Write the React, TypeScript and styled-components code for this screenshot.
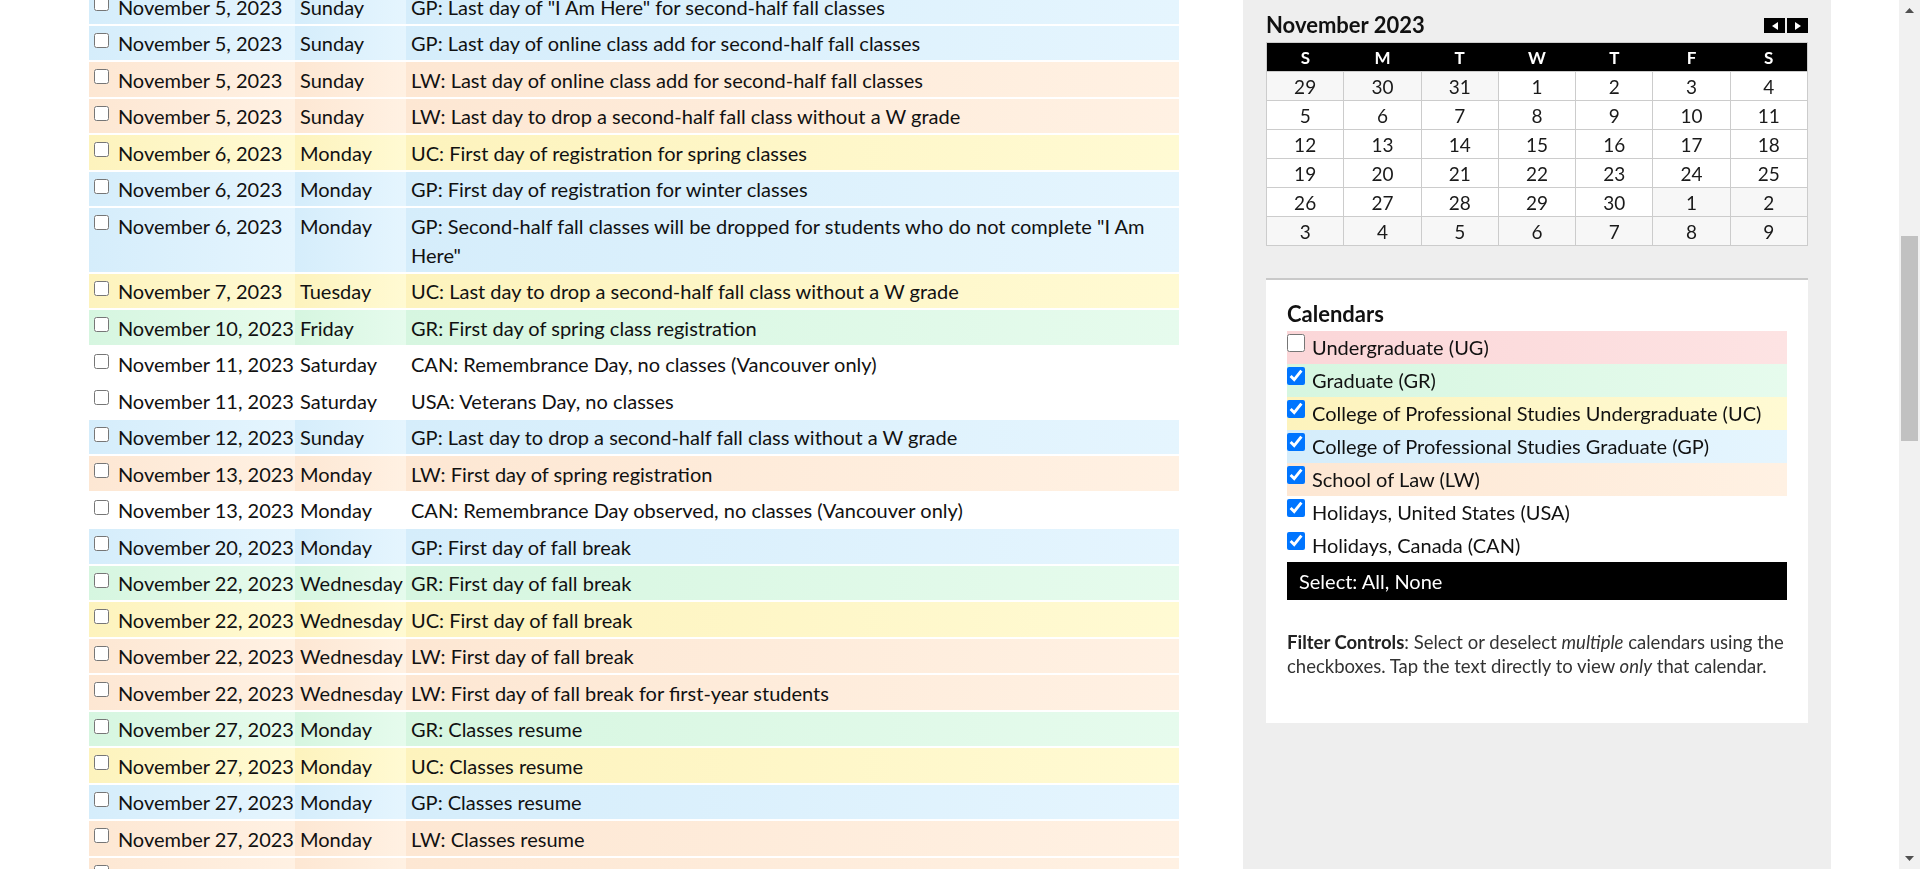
import React, { useLayoutEffect, useRef, useState } from "react";
import styled, { createGlobalStyle } from "styled-components";

type Cal = "UG" | "GR" | "UC" | "GP" | "LW" | "USA" | "CAN";

type CalEvent = {
  date: string;
  day: string;
  cal: Cal;
  text: string;
};

const tints: Record<Cal, [string, string]> = {
  UG: ["#fbd6d8", "#fde3e3"],
  GR: ["#d6f6e0", "#e6fbed"],
  UC: ["#fdf3bd", "#fffad3"],
  GP: ["#d5edfb", "#e5f5fe"],
  LW: ["#fde7d3", "#fff1e3"],
  USA: ["#ffffff", "#ffffff"],
  CAN: ["#ffffff", "#ffffff"],
};

// rows above the fold (scrolled out of view)
const earlier: CalEvent[] = [
  { date: "October 28, 2023", day: "Saturday", cal: "GP", text: "Last day of first-half fall classes" },
  { date: "October 28, 2023", day: "Saturday", cal: "UC", text: "Last day of first-half fall classes" },
  { date: "October 29, 2023", day: "Sunday", cal: "GP", text: "First-half fall break" },
  { date: "October 29, 2023", day: "Sunday", cal: "LW", text: "First-half fall break" },
  { date: "October 30, 2023", day: "Monday", cal: "GP", text: "First day of second-half fall classes" },
  { date: "October 30, 2023", day: "Monday", cal: "UC", text: "First day of second-half fall classes" },
  { date: "October 30, 2023", day: "Monday", cal: "LW", text: "First day of second-half fall classes" },
  { date: "October 30, 2023", day: "Monday", cal: "GR", text: "Last day to withdraw from fall classes" },
  { date: "October 31, 2023", day: "Tuesday", cal: "UC", text: "First-half fall final grades due" },
  { date: "October 31, 2023", day: "Tuesday", cal: "GP", text: "First-half fall final grades due" },
  { date: "November 1, 2023", day: "Wednesday", cal: "LW", text: "First-half fall final grades due" },
  { date: "November 1, 2023", day: "Wednesday", cal: "GR", text: "Fall graduation application deadline" },
  { date: "November 2, 2023", day: "Thursday", cal: "UC", text: "Last day of in-person class add for second-half fall classes" },
  { date: "November 2, 2023", day: "Thursday", cal: "GP", text: "Last day of in-person class add for second-half fall classes" },
  { date: "November 3, 2023", day: "Friday", cal: "LW", text: "Last day of in-person class add for second-half fall classes" },
  { date: "November 3, 2023", day: "Friday", cal: "GR", text: "Last day to drop a fall class without a W grade" },
  { date: "November 4, 2023", day: "Saturday", cal: "UC", text: "Last day of online class add for second-half fall classes" },
  { date: "November 4, 2023", day: "Saturday", cal: "UC", text: "Last day of \"I Am Here\" for second-half fall classes" },
  { date: "November 5, 2023", day: "Sunday", cal: "USA", text: "Daylight saving time ends" },
  { date: "November 5, 2023", day: "Sunday", cal: "CAN", text: "Daylight saving time ends" },
  { date: "November 5, 2023", day: "Sunday", cal: "UC", text: "Last day to drop a second-half fall class without a W grade" },
  { date: "November 5, 2023", day: "Sunday", cal: "LW", text: "Last day of \"I Am Here\" for second-half fall classes" },
];

const visible: CalEvent[] = [
  { date: "November 5, 2023", day: "Sunday", cal: "GP", text: "Last day of \"I Am Here\" for second-half fall classes" },
  { date: "November 5, 2023", day: "Sunday", cal: "GP", text: "Last day of online class add for second-half fall classes" },
  { date: "November 5, 2023", day: "Sunday", cal: "LW", text: "Last day of online class add for second-half fall classes" },
  { date: "November 5, 2023", day: "Sunday", cal: "LW", text: "Last day to drop a second-half fall class without a W grade" },
  { date: "November 6, 2023", day: "Monday", cal: "UC", text: "First day of registration for spring classes" },
  { date: "November 6, 2023", day: "Monday", cal: "GP", text: "First day of registration for winter classes" },
  { date: "November 6, 2023", day: "Monday", cal: "GP", text: "Second-half fall classes will be dropped for students who do not complete \"I Am Here\"" },
  { date: "November 7, 2023", day: "Tuesday", cal: "UC", text: "Last day to drop a second-half fall class without a W grade" },
  { date: "November 10, 2023", day: "Friday", cal: "GR", text: "First day of spring class registration" },
  { date: "November 11, 2023", day: "Saturday", cal: "CAN", text: "Remembrance Day, no classes (Vancouver only)" },
  { date: "November 11, 2023", day: "Saturday", cal: "USA", text: "Veterans Day, no classes" },
  { date: "November 12, 2023", day: "Sunday", cal: "GP", text: "Last day to drop a second-half fall class without a W grade" },
  { date: "November 13, 2023", day: "Monday", cal: "LW", text: "First day of spring registration" },
  { date: "November 13, 2023", day: "Monday", cal: "CAN", text: "Remembrance Day observed, no classes (Vancouver only)" },
  { date: "November 20, 2023", day: "Monday", cal: "GP", text: "First day of fall break" },
  { date: "November 22, 2023", day: "Wednesday", cal: "GR", text: "First day of fall break" },
  { date: "November 22, 2023", day: "Wednesday", cal: "UC", text: "First day of fall break" },
  { date: "November 22, 2023", day: "Wednesday", cal: "LW", text: "First day of fall break" },
  { date: "November 22, 2023", day: "Wednesday", cal: "LW", text: "First day of fall break for first-year students" },
  { date: "November 27, 2023", day: "Monday", cal: "GR", text: "Classes resume" },
  { date: "November 27, 2023", day: "Monday", cal: "UC", text: "Classes resume" },
  { date: "November 27, 2023", day: "Monday", cal: "GP", text: "Classes resume" },
  { date: "November 27, 2023", day: "Monday", cal: "LW", text: "Classes resume" },
  { date: "November 27, 2023", day: "Monday", cal: "LW", text: "Classes resume for first-year students" },
  { date: "November 23, 2023", day: "Thursday", cal: "USA", text: "Thanksgiving, no classes" },
  { date: "December 2, 2023", day: "Saturday", cal: "GP", text: "Last day of fall classes" },
  { date: "December 2, 2023", day: "Saturday", cal: "UC", text: "Last day of fall classes" },
  { date: "December 4, 2023", day: "Monday", cal: "GR", text: "Final exams begin" },
  { date: "December 4, 2023", day: "Monday", cal: "LW", text: "Final exams begin" },
  { date: "December 9, 2023", day: "Saturday", cal: "GR", text: "Last day of fall classes" },
  { date: "December 11, 2023", day: "Monday", cal: "GP", text: "First day of winter classes" },
  { date: "December 11, 2023", day: "Monday", cal: "UC", text: "First day of winter classes" },
  { date: "December 15, 2023", day: "Friday", cal: "LW", text: "Last day of final exams" },
  { date: "December 18, 2023", day: "Monday", cal: "GR", text: "Fall final grades due" },
  { date: "December 25, 2023", day: "Monday", cal: "USA", text: "Christmas Day, university closed" },
  { date: "December 25, 2023", day: "Monday", cal: "CAN", text: "Christmas Day, university closed" },
  { date: "December 26, 2023", day: "Tuesday", cal: "CAN", text: "Boxing Day, university closed" },
];

const weeks: number[][] = [
  [29, 30, 31, 1, 2, 3, 4],
  [5, 6, 7, 8, 9, 10, 11],
  [12, 13, 14, 15, 16, 17, 18],
  [19, 20, 21, 22, 23, 24, 25],
  [26, 27, 28, 29, 30, 1, 2],
  [3, 4, 5, 6, 7, 8, 9],
];

const filters: { cal: Cal; label: string; on: boolean }[] = [
  { cal: "UG", label: "Undergraduate (UG)", on: false },
  { cal: "GR", label: "Graduate (GR)", on: true },
  { cal: "UC", label: "College of Professional Studies Undergraduate (UC)", on: true },
  { cal: "GP", label: "College of Professional Studies Graduate (GP)", on: true },
  { cal: "LW", label: "School of Law (LW)", on: true },
  { cal: "USA", label: "Holidays, United States (USA)", on: true },
  { cal: "CAN", label: "Holidays, Canada (CAN)", on: true },
];

const GlobalStyle = createGlobalStyle`
  html, body {
    margin: 0;
    padding: 0;
    overflow: hidden;
  }
  body {
    font-family: Lato, "Open Sans", sans-serif;
    color: #111;
  }
`;

const Shell = styled.div`
  display: flex;
  height: 100vh;
`;

const ScrollArea = styled.div`
  position: relative;
  flex: 1;
  min-width: 0;
  overflow-y: scroll;
  overflow-x: hidden;
  background: #fff;
  scrollbar-width: none;

  &::-webkit-scrollbar {
    display: none;
  }
`;

// window scrollbar, drawn since the headless browser hides the native one
const Rail = styled.div`
  flex: none;
  width: 21px;
  display: flex;
  flex-direction: column;
  background: #f1f1f1;
`;

const RailButton = styled.div`
  flex: none;
  height: 21px;
  display: flex;
  align-items: center;
  justify-content: center;
`;

const RailTrack = styled.div`
  position: relative;
  flex: 1;
`;

const Thumb = styled.div`
  position: absolute;
  left: 2px;
  right: 2px;
  background: #c1c1c1;
`;

const Page = styled.div`
  display: flex;
  min-height: 3506px;
`;

const Main = styled.main`
  flex: none;
  width: 1243px;
  box-sizing: border-box;
  padding: 0 64px 40px 89px;
`;

const PageTitle = styled.h1`
  margin: 0;
  padding: 30px 0 27px;
  font-size: 32px;
  line-height: 40px;
  font-weight: 700;
`;

const EventList = styled.div`
  display: flex;
  flex-direction: column;
  gap: 2px;
`;

const EventRow = styled.div`
  display: grid;
  grid-template-columns: 206px 111px 1fr;
`;

const Cell = styled.div<{ $cal: Cal }>`
  padding: 3.5px 5px 2px;
  font-size: 20px;
  line-height: 29px;
  color: #111;
  background: linear-gradient(
    to right,
    ${(p) => tints[p.$cal][0]},
    ${(p) => tints[p.$cal][1]}
  );
`;

const DateCell = styled(Cell)`
  padding-left: 0;
  white-space: nowrap;
`;

const RowCheck = styled.input.attrs({ type: "checkbox" })`
  width: 15px;
  height: 15px;
  margin: 3.5px 3.75px 0 5px;
  vertical-align: top;
`;

const Sidebar = styled.aside`
  flex: none;
  width: 588px;
  background: #eeeeee;
`;

const SidebarInner = styled.div`
  position: sticky;
  top: 0;
  padding: 10px 23px 0;
`;

const CalHead = styled.div`
  display: flex;
  justify-content: space-between;
  align-items: flex-start;
  height: 32px;
`;

const CalTitle = styled.h2`
  margin: 0;
  font-size: 22px;
  line-height: 30px;
  font-weight: 700;
  color: #111;
`;

const NavGroup = styled.div`
  display: flex;
  gap: 2px;
  margin-top: 8px;
`;

const NavButton = styled.button`
  width: 21px;
  height: 15px;
  padding: 0;
  border: 0;
  background: #000;
  display: flex;
  align-items: center;
  justify-content: center;
  cursor: pointer;
`;

const MonthTable = styled.table`
  width: 100%;
  border-collapse: collapse;
  table-layout: fixed;
  border: 1px solid #cccccc;
`;

const DayHead = styled.th`
  background: #000;
  color: #fff;
  font-size: 17px;
  font-weight: 700;
  height: 28px;
  padding: 0;
  text-align: center;
`;

const DayCell = styled.td<{ $other: boolean }>`
  border: 1px solid #cccccc;
  height: 28px;
  padding: 0;
  text-align: center;
  font-size: 19px;
  color: #1a1a1a;
  background: ${(p) => (p.$other ? "#f7f7f7" : "#ffffff")};
`;

const FilterPanel = styled.section`
  margin-top: 32px;
  background: #fff;
  border-top: 2px solid #c9c9c9;
  padding: 21px 21px 45px;
`;

const FilterTitle = styled.h2`
  margin: 0 0 4px;
  font-size: 22px;
  line-height: 26px;
  font-weight: 700;
  color: #111;
`;

const FilterRow = styled.label<{ $cal: Cal }>`
  display: flex;
  align-items: flex-start;
  height: 33px;
  font-size: 20px;
  line-height: 33px;
  color: #111;
  background: linear-gradient(
    to right,
    ${(p) => tints[p.$cal][0]},
    ${(p) => tints[p.$cal][1]}
  );
`;

const FilterCheck = styled.input.attrs({ type: "checkbox" })`
  flex: none;
  width: 18px;
  height: 18px;
  margin: 2.5px 7px 0 0;
`;

const SelectBar = styled.div`
  height: 38px;
  line-height: 38px;
  padding: 0 12px;
  background: #000;
  color: #fff;
  font-size: 20px;
`;

const Help = styled.p`
  margin: 30px 0 0;
  font-size: 18.5px;
  line-height: 24px;
  color: #333;

  strong {
    color: #222;
  }
`;

const Gutter = styled.div`
  flex: 1;
`;

const Triangle = ({ dir }: { dir: "left" | "right" }) => (
  <svg width="6" height="8" viewBox="0 0 6 8">
    <polygon points={dir === "left" ? "6,0 6,8 0,4" : "0,0 0,8 6,4"} fill="#fff" />
  </svg>
);

const RailArrow = ({ dir }: { dir: "up" | "down" }) => (
  <svg width="9" height="5" viewBox="0 0 9 5">
    <polygon points={dir === "up" ? "4.5,0 9,5 0,5" : "0,0 9,0 4.5,5"} fill="#505050" />
  </svg>
);

const EventLine = ({ ev, rowRef }: { ev: CalEvent; rowRef?: React.Ref<HTMLDivElement> }) => (
  <EventRow ref={rowRef}>
    <DateCell $cal={ev.cal}>
      <RowCheck /> {ev.date}
    </DateCell>
    <Cell $cal={ev.cal}>{ev.day}</Cell>
    <Cell $cal={ev.cal}>
      {ev.cal}: {ev.text}
    </Cell>
  </EventRow>
);

const App = () => {
  const areaRef = useRef<HTMLDivElement>(null);
  const firstRef = useRef<HTMLDivElement>(null);
  const trackRef = useRef<HTMLDivElement>(null);
  const [thumb, setThumb] = useState({ top: 0, height: 0 });

  useLayoutEffect(() => {
    const area = areaRef.current;
    const first = firstRef.current;
    const track = trackRef.current;
    if (!area || !first || !track) return;
    area.scrollTop = first.offsetTop + 11;
    const len = track.clientHeight;
    const height = Math.max(20, (len * area.clientHeight) / area.scrollHeight);
    const max = area.scrollHeight - area.clientHeight;
    const top = max > 0 ? ((len - height) * area.scrollTop) / max : 0;
    setThumb({ top, height });
  }, []);

  return (
    <>
      <GlobalStyle />
      <Shell>
        <ScrollArea ref={areaRef}>
          <Page>
            <Main>
              <PageTitle>Academic Calendar</PageTitle>
              <EventList>
                {earlier.map((ev, i) => (
                  <EventLine key={"e" + i} ev={ev} />
                ))}
                {visible.map((ev, i) => (
                  <EventLine key={"v" + i} ev={ev} rowRef={i === 0 ? firstRef : undefined} />
                ))}
              </EventList>
            </Main>
            <Sidebar>
              <SidebarInner>
                <CalHead>
                  <CalTitle>November 2023</CalTitle>
                  <NavGroup>
                    <NavButton aria-label="Previous month">
                      <Triangle dir="left" />
                    </NavButton>
                    <NavButton aria-label="Next month">
                      <Triangle dir="right" />
                    </NavButton>
                  </NavGroup>
                </CalHead>
                <MonthTable>
                  <thead>
                    <tr>
                      {["S", "M", "T", "W", "T", "F", "S"].map((d, i) => (
                        <DayHead key={i}>{d}</DayHead>
                      ))}
                    </tr>
                  </thead>
                  <tbody>
                    {weeks.map((week, w) => (
                      <tr key={w}>
                        {week.map((n, i) => {
                          const other = (w === 0 && n > 20) || (w >= 4 && n < 20);
                          return (
                            <DayCell key={i} $other={other}>
                              {n}
                            </DayCell>
                          );
                        })}
                      </tr>
                    ))}
                  </tbody>
                </MonthTable>

                <FilterPanel>
                  <FilterTitle>Calendars</FilterTitle>
                  {filters.map((f) => (
                    <FilterRow key={f.cal} $cal={f.cal}>
                      <FilterCheck defaultChecked={f.on} />
                      {f.label}
                    </FilterRow>
                  ))}
                  <SelectBar>Select: All, None</SelectBar>
                  <Help>
                    <strong>Filter Controls</strong>: Select or deselect <em>multiple</em> calendars
                    using the checkboxes. Tap the text directly to view <em>only</em> that calendar.
                  </Help>
                </FilterPanel>
              </SidebarInner>
            </Sidebar>
            <Gutter />
          </Page>
        </ScrollArea>
        <Rail>
          <RailButton>
            <RailArrow dir="up" />
          </RailButton>
          <RailTrack ref={trackRef}>
            <Thumb style={{ top: thumb.top, height: thumb.height }} />
          </RailTrack>
          <RailButton>
            <RailArrow dir="down" />
          </RailButton>
        </Rail>
      </Shell>
    </>
  );
};

export default App;
